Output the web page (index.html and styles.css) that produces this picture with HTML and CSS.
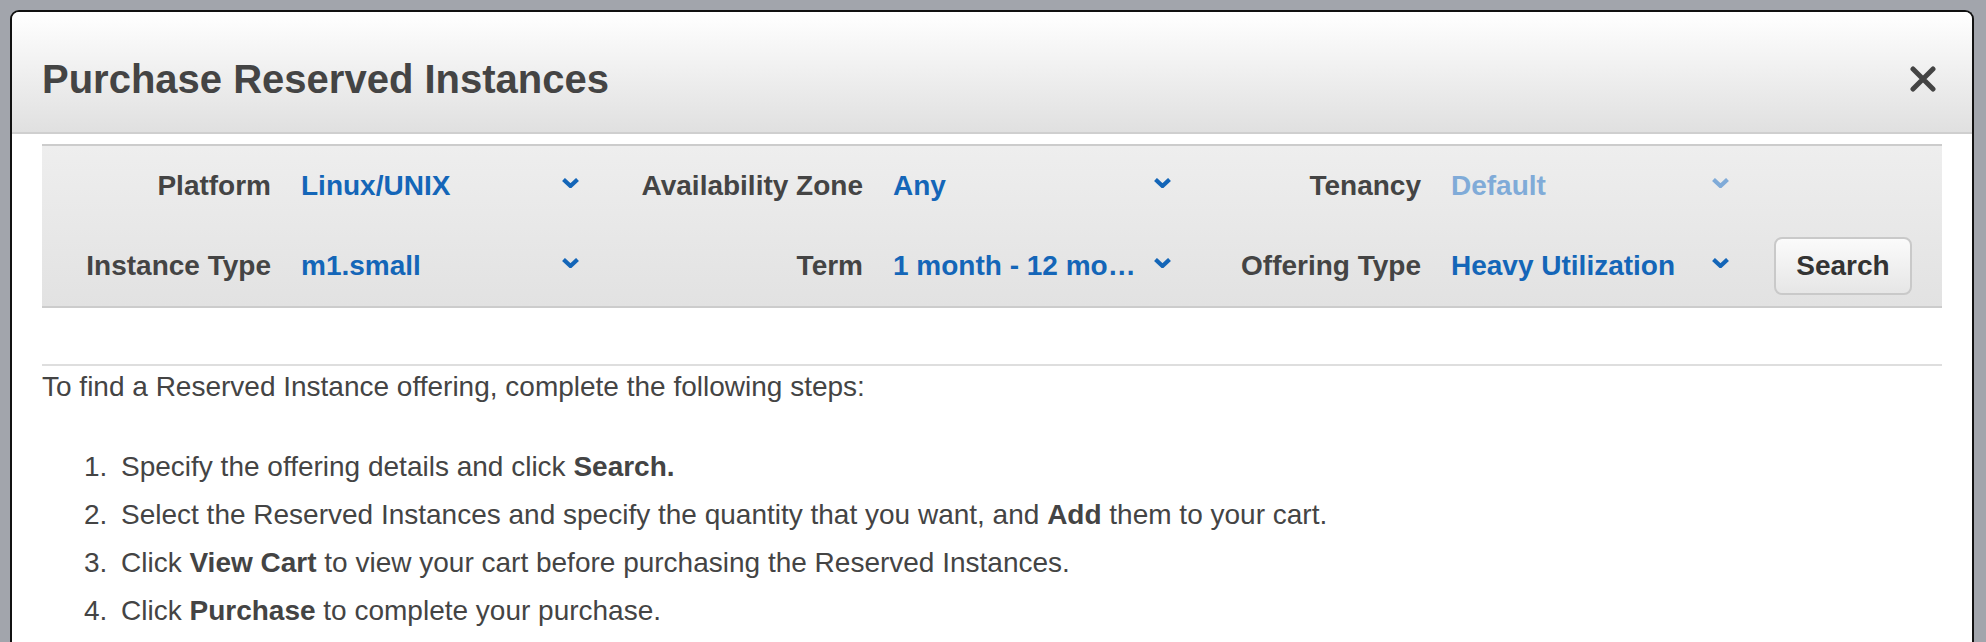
FILE: index.html
```html
<!DOCTYPE html>
<html lang="en">
<head>
<meta charset="utf-8">
<title>Purchase Reserved Instances</title>
<link rel="stylesheet" href="styles.css">
</head>
<body>
<div class="modal">
  <header class="modal-header">
    <h1 class="modal-title">Purchase Reserved Instances</h1>
    <button class="close" aria-label="Close">
      <svg width="26" height="26" viewBox="0 0 26 26"><path d="M3 3 L23 23 M23 3 L3 23" stroke="#444" stroke-width="5" stroke-linecap="round" fill="none"/></svg>
    </button>
  </header>
  <div class="modal-body">
    <div class="filters">
      <label class="f-label">Platform</label>
      <div class="select"><span class="value">Linux/UNIX</span><svg class="chev" width="17" height="10" viewBox="0 0 17 10"><path d="M1.5 1.5 L8.5 8 L15.5 1.5" stroke="currentColor" stroke-width="4.2" fill="none"/></svg></div>
      <label class="f-label">Availability Zone</label>
      <div class="select"><span class="value">Any</span><svg class="chev" width="17" height="10" viewBox="0 0 17 10"><path d="M1.5 1.5 L8.5 8 L15.5 1.5" stroke="currentColor" stroke-width="4.2" fill="none"/></svg></div>
      <label class="f-label">Tenancy</label>
      <div class="select disabled"><span class="value">Default</span><svg class="chev" width="17" height="10" viewBox="0 0 17 10"><path d="M1.5 1.5 L8.5 8 L15.5 1.5" stroke="currentColor" stroke-width="4.2" fill="none"/></svg></div>
      <div class="f-empty"></div>

      <label class="f-label">Instance Type</label>
      <div class="select"><span class="value">m1.small</span><svg class="chev" width="17" height="10" viewBox="0 0 17 10"><path d="M1.5 1.5 L8.5 8 L15.5 1.5" stroke="currentColor" stroke-width="4.2" fill="none"/></svg></div>
      <label class="f-label">Term</label>
      <div class="select"><span class="value" title="1 month - 12 months">1 month - 12 mo…</span><svg class="chev" width="17" height="10" viewBox="0 0 17 10"><path d="M1.5 1.5 L8.5 8 L15.5 1.5" stroke="currentColor" stroke-width="4.2" fill="none"/></svg></div>
      <label class="f-label">Offering Type</label>
      <div class="select"><span class="value">Heavy Utilization</span><svg class="chev" width="17" height="10" viewBox="0 0 17 10"><path d="M1.5 1.5 L8.5 8 L15.5 1.5" stroke="currentColor" stroke-width="4.2" fill="none"/></svg></div>
      <button class="search-btn">Search</button>
    </div>

    <div class="instructions">
      <p class="intro">To find a Reserved Instance offering, complete the following steps:</p>
      <ol class="steps">
        <li>Specify the offering details and click <b>Search.</b></li>
        <li>Select the Reserved Instances and specify the quantity that you want, and <b>Add</b> them to your cart.</li>
        <li>Click <b>View Cart</b> to view your cart before purchasing the Reserved Instances.</li>
        <li>Click <b>Purchase</b> to complete your purchase.</li>
      </ol>
    </div>
  </div>
</div>
</body>
</html>
```
FILE: styles.css
```css
html, body {
  margin: 0;
  height: 100%;
  overflow: hidden;
}
body {
  background: #a2a5ac;
  padding: 10px 12px 0 10px;
  box-sizing: border-box;
  font-family: "Liberation Sans", Arial, Helvetica, sans-serif;
  color: #444;
}
.modal {
  background: #fff;
  border: 2px solid #111;
  border-bottom: none;
  border-radius: 9px 9px 0 0;
  min-height: 700px;
  overflow: hidden;
}
.modal-header {
  height: 122px;
  box-sizing: border-box;
  padding: 13px 36px 0 30px;
  display: flex;
  align-items: center;
  justify-content: space-between;
  background: linear-gradient(#ffffff, #e0e0e0);
  border-bottom: 2px solid #cfcfcf;
}
.modal-title {
  margin: 0;
  font-size: 40px;
  line-height: 40px;
  font-weight: bold;
  color: #444;
}
.close {
  border: none;
  background: none;
  padding: 0;
  width: 26px;
  height: 26px;
  display: flex;
}
.modal-body {
  padding: 10px 30px 0 30px;
}
.filters {
  display: grid;
  grid-template-columns: 186px 280px 252px 280px 218px 280px 151px;
  grid-auto-rows: 58px;
  column-gap: 30px;
  row-gap: 22px;
  align-items: center;
  padding: 11px 30px 11px 43px;
  background: linear-gradient(#eeeeee, #e2e2e2);
  border-top: 2px solid #cccccc;
  border-bottom: 2px solid #cccccc;
}
.f-label {
  font-size: 28px;
  font-weight: bold;
  text-align: right;
  line-height: 58px;
  white-space: nowrap;
  color: #444;
}
.select {
  display: flex;
  align-items: center;
  height: 58px;
  color: #1466b8;
  font-size: 28px;
  font-weight: bold;
  line-height: 58px;
}
.select.disabled {
  color: #80abd8;
}
.value {
  flex: 1;
  min-width: 0;
  max-width: 252px;
  white-space: nowrap;
}
.chev {
  margin-left: auto;
  margin-right: 2px;
  margin-bottom: 6px;
  flex: none;
}
.search-btn {
  justify-self: end;
  height: 58px;
  width: 138px;
  box-sizing: border-box;
  border: 2px solid #c9c9c9;
  border-radius: 8px;
  background: linear-gradient(#fbfbfb, #e6e6e6);
  font-family: inherit;
  font-size: 28px;
  font-weight: bold;
  color: #333;
  padding: 0;
}
.instructions {
  margin-top: 56px;
  border-top: 2px solid #dedede;
}
.intro {
  margin: 1px 0 0 0;
  font-size: 28px;
  line-height: 40px;
}
.steps {
  list-style: none;
  counter-reset: step;
  margin: 36px 0 0 0;
  padding: 0 0 0 42px;
}
.steps li {
  counter-increment: step;
  font-size: 28px;
  line-height: 48px;
  white-space: nowrap;
}
.steps li::before {
  content: counter(step) ".";
  display: inline-block;
  width: 37px;
}
```
